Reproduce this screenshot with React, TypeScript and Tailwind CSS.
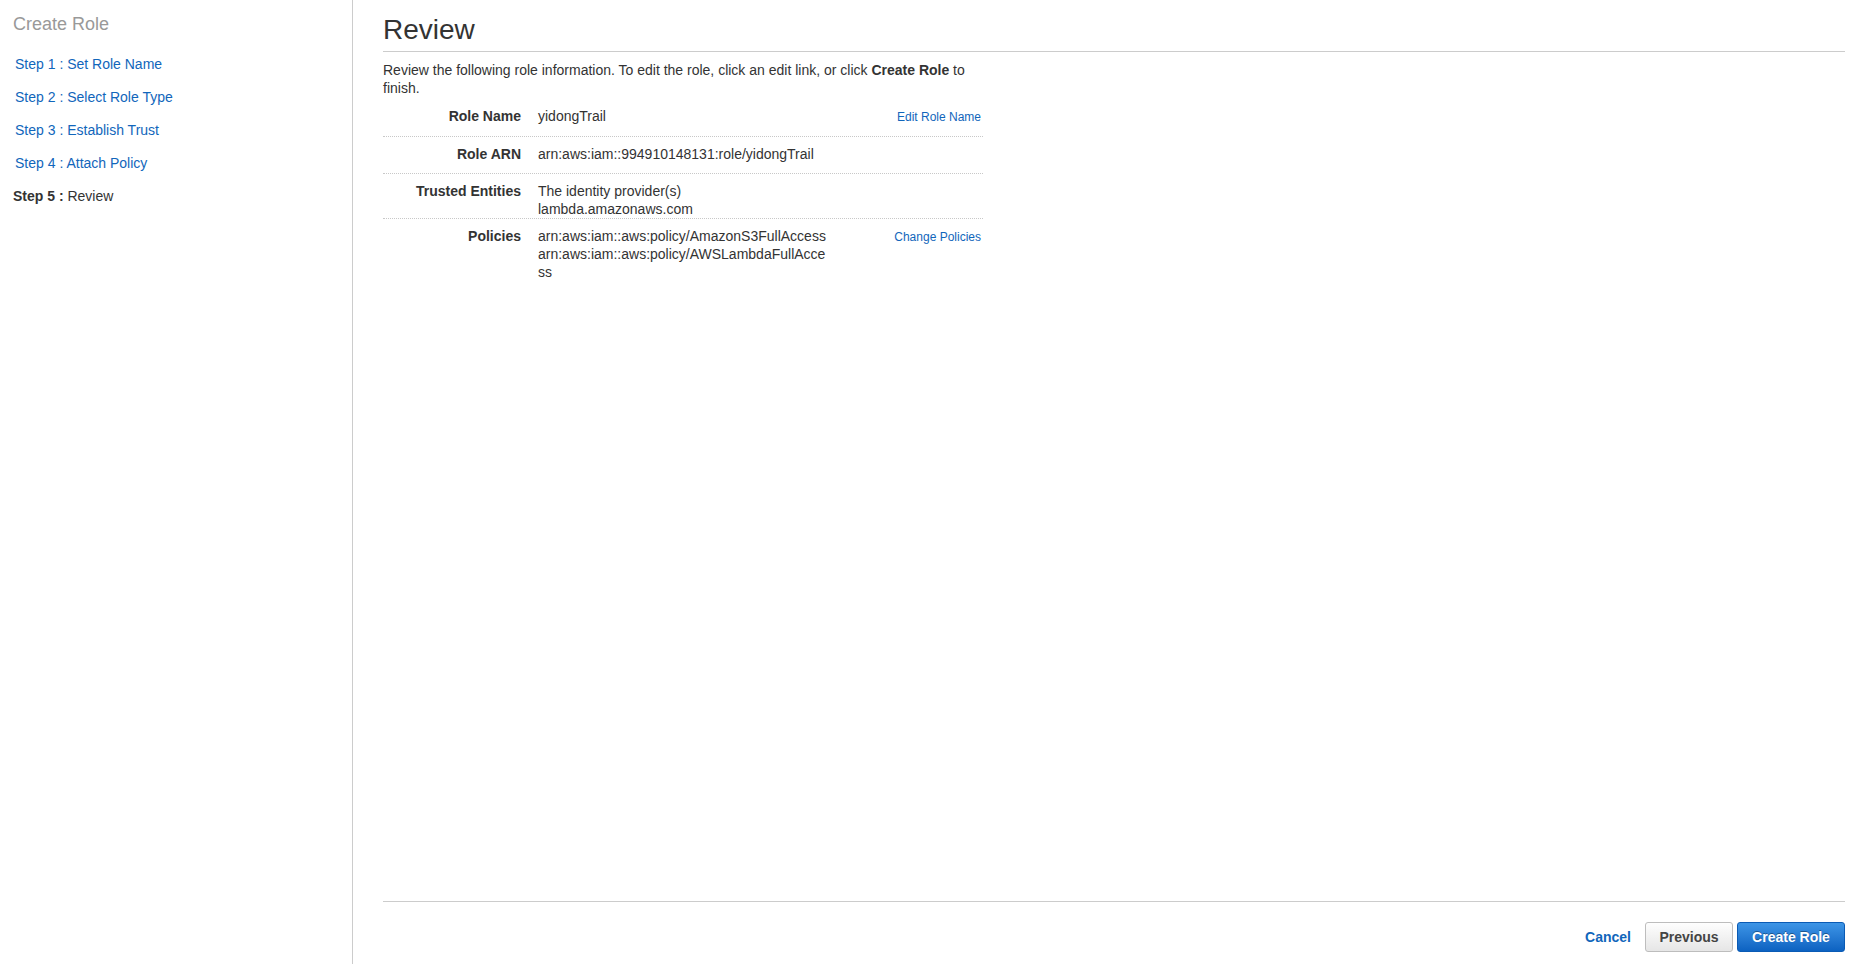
import * as React from 'react';

type Row = {
  label: string;
  values: string[];
  action?: string;
  pad: string;
};

const steps = ['Set Role Name', 'Select Role Type', 'Establish Trust', 'Attach Policy'];

const rows: Row[] = [
  { label: 'Role Name', values: ['yidongTrail'], action: 'Edit Role Name', pad: 'pt-[8px] pb-[10px]' },
  { label: 'Role ARN', values: ['arn:aws:iam::994910148131:role/yidongTrail'], pad: 'pt-[8px] pb-[10px]' },
  {
    label: 'Trusted Entities',
    values: ['The identity provider(s)', 'lambda.amazonaws.com'],
    pad: 'pt-[8px] pb-0',
  },
  {
    label: 'Policies',
    values: ['arn:aws:iam::aws:policy/AmazonS3FullAccess', 'arn:aws:iam::aws:policy/AWSLambdaFullAccess'],
    action: 'Change Policies',
    pad: 'pt-[8px] pb-[10px]',
  },
];

function Sidebar() {
  return (
    <div className="w-[353px] shrink-0 border-r border-[#cccccc] pl-[13px] pt-[14px]">
      <h2 className="text-[18px] leading-[20px] text-[#999999]">Create Role</h2>
      <ul className="mt-[13px] text-[14px] leading-[18px]">
        {steps.map((s, i) => (
          <li key={s} className="py-[7.5px] pl-[2px]">
            <a href="#" className="text-[#1166bb] hover:underline">
              Step {i + 1} : {s}
            </a>
          </li>
        ))}
        <li className="py-[7.5px] text-[#333333]">
          <span className="font-bold">Step 5 :</span> Review
        </li>
      </ul>
    </div>
  );
}

function ReviewTable() {
  return (
    <div className="w-[600px] text-[14px] leading-[18px] text-[#333333]">
      {rows.map((row, i) => (
        <div
          key={row.label}
          className={`flex ${row.pad} ${i < rows.length - 1 ? 'border-b border-dotted border-[#c8c8c8]' : ''}`}
        >
          <div className="w-[138px] shrink-0 text-right font-bold">{row.label}</div>
          <div className="ml-[17px] w-[291px] break-all">
            {row.values.map((v) => (
              <div key={v}>{v}</div>
            ))}
          </div>
          <div className="flex-1 pr-[2px] text-right">
            {row.action && (
              <a href="#" className="text-[12px] text-[#1166bb] hover:underline">
                {row.action}
              </a>
            )}
          </div>
        </div>
      ))}
    </div>
  );
}

export default function App() {
  return (
    <div className="flex h-[964px] bg-white font-['Liberation_Sans',Arial,sans-serif]">
      <Sidebar />
      <div className="flex flex-1 flex-col pl-[30px] pr-[8px]">
        <div className="flex-1">
          <h1 className="border-b border-[#cccccc] pb-[6px] pt-[14px] text-[28px] leading-[31px] text-[#333333]">
            Review
          </h1>
          <p className="mt-[9px] w-[600px] text-[14px] leading-[18px] text-[#333333]">
            Review the following role information. To edit the role, click an edit link, or click{' '}
            <span className="font-bold">Create Role</span> to finish.
          </p>
          <div className="mt-[2px]">
            <ReviewTable />
          </div>
        </div>
        <div className="flex h-[63px] items-start justify-end border-t border-[#cccccc] pt-[20px]">
          <a href="#" className="mr-[14px] mt-[5px] text-[14px] font-bold text-[#1166bb]">
            Cancel
          </a>
          <button className="h-[30px] w-[88px] rounded-[3px] border border-[#bdbdbd] bg-gradient-to-b from-[#fefefe] to-[#e6e6e6] text-[14px] font-bold text-[#444444]">
            Previous
          </button>
          <button className="ml-[4px] h-[30px] w-[108px] rounded-[3px] border border-[#0a5bb5] bg-gradient-to-b from-[#3d95e6] to-[#0c62c1] text-[14px] font-bold text-white [text-shadow:0_-1px_0_rgba(0,0,0,0.35)]">
            Create Role
          </button>
        </div>
      </div>
    </div>
  );
}
